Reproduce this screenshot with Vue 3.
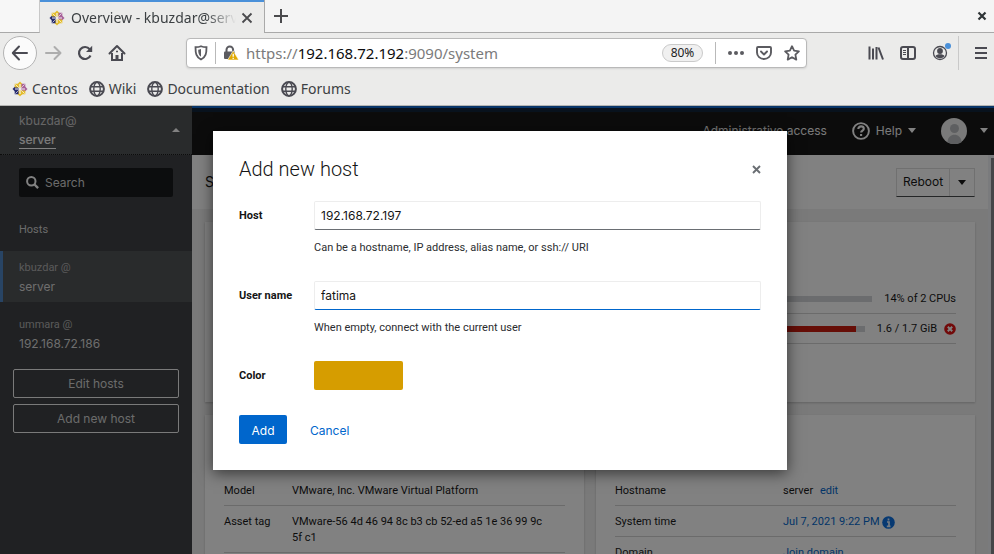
<script setup>
import { ref } from 'vue'

const bookmarks = ['Wiki', 'Documentation', 'Forums']
const petals = [
  { angle: 0, arm: '#e3bd2e', corner: '#a8629a' },
  { angle: 90, arm: '#a8629a', corner: '#e3bd2e' },
  { angle: 180, arm: '#e3bd2e', corner: '#262b70' },
  { angle: 270, arm: '#262b70', corner: '#e3bd2e' },
]

const search = ref('')
const host = ref('192.168.72.197')
const userName = ref('fatima')
const color = ref('#d69d00')

const hosts = [
  { user: 'kbuzdar @', name: 'server', active: true },
  { user: 'ummara @', name: '192.168.72.186', active: false },
]

const usage = [
  { text: '14% of 2 CPUs', percent: 14, critical: false },
  { text: '1.6 / 1.7 GiB', percent: 95, critical: true },
]
</script>

<template>
  <div class="window">
    <header class="browser">
      <div class="tabs">
        <div class="tab-lead"></div>
        <div class="tab">
          <svg class="favicon" viewBox="0 0 16 16" aria-hidden="true">
            <g v-for="p in petals" :key="p.angle" :transform="`rotate(${p.angle} 8 8)`">
              <path d="M8 .5l2.200 2.200v2.800L8 7.400 5.800 5.500V2.700z" :fill="p.arm" />
              <path d="M9.500 2.700h3.800v3.800H11L9.500 7z" :fill="p.corner" />
              <path d="M9.400 6.600l3.200-3.200" stroke="#fff" stroke-width=".7" />
            </g>
            <path d="M8 3v10M3 8h10" stroke="#f3f0ee" stroke-width="1.200" />
          </svg>
          <span class="tab-title">Overview - kbuzdar@serv</span>
          <button class="icon-btn" aria-label="Close tab">
            <svg width="12" height="12" viewBox="0 0 12 12"><path d="M1.500 1.500l9 9M10.500 1.500l-9 9" stroke="#4a4a4d" stroke-width="1.800" /></svg>
          </button>
        </div>
        <div class="tab-rest">
          <button class="icon-btn" aria-label="New tab">
            <svg width="16" height="16" viewBox="0 0 16 16"><path d="M8 1v14M1 8h14" stroke="#4a4a4d" stroke-width="2" /></svg>
          </button>
          <button class="icon-btn" aria-label="Close window">
            <svg width="10" height="10" viewBox="0 0 10 10"><path d="M1.500 1.500l7 7M8.500 1.500l-7 7" stroke="#2e3436" stroke-width="2.200" /></svg>
          </button>
        </div>
      </div>

      <div class="nav">
        <button class="back" aria-label="Back">
          <svg width="18" height="18" viewBox="0 0 18 18" fill="none" stroke="#4a4a52" stroke-width="2" stroke-linecap="round" stroke-linejoin="round"><path d="M16 9H2M8 2.500L1.800 9 8 15.500" /></svg>
        </button>
        <button class="icon-btn" aria-label="Forward">
          <svg width="18" height="18" viewBox="0 0 18 18" fill="none" stroke="#adadad" stroke-width="2" stroke-linecap="round" stroke-linejoin="round"><path d="M2 9h14M10.500 3l6 6-6 6" /></svg>
        </button>
        <button class="icon-btn" aria-label="Reload">
          <svg width="18" height="18" viewBox="0 0 18 18"><path d="M14.500 11.500a6 6 0 1 1-.8-6.300" fill="none" stroke="#4a4a52" stroke-width="2.200" /><path d="M16.200 1.800v6.200H10z" fill="#4a4a52" /></svg>
        </button>
        <button class="icon-btn" aria-label="Home">
          <svg width="18" height="18" viewBox="0 0 18 18"><path d="M1.500 9.500L9 2l7.500 7.500" fill="none" stroke="#4a4a52" stroke-width="2" stroke-linecap="round" stroke-linejoin="round" /><path d="M4 9v7h10V9" fill="none" stroke="#4a4a52" stroke-width="2" /><path d="M7.500 16v-5h3v5z" fill="#4a4a52" /><path d="M8 7.500h2" stroke="#4a4a52" stroke-width="1.500" /></svg>
        </button>
        <div class="address">
          <svg width="14" height="16" viewBox="0 0 14 16"><path d="M7 1.200c2 .9 4 1 5.500 1 0 6-.5 9.800-5.500 12.300C2 12 1.500 8.200 1.500 2.200 3 2.200 5 2.100 7 1.200z" fill="none" stroke="#5b5b60" stroke-width="1.800" /><path d="M7 4v7.800C4.700 10 4.200 8 4.200 4.700 5.200 4.700 6 4.500 7 4z" fill="#5b5b60" /></svg>
          <i class="rule"></i>
          <svg width="16" height="16" viewBox="0 0 16 16"><path d="M3.500 7V4.800a3.300 3.300 0 0 1 6.600 0V7" fill="none" stroke="#5b5b60" stroke-width="2" /><rect x="1" y="6.500" width="11" height="7.500" rx="1" fill="#5b5b60" /><path d="M10.200 5.800l5.600 9.200H4.600z" fill="#e0a900" stroke="#fff" stroke-width=".6" stroke-linejoin="round" /><path d="M10.200 8.800v3M10.200 12.800v1.200" stroke="#fff" stroke-width="1.300" /></svg>
          <div class="url" role="textbox" aria-label="Address">https://<b>192.168.72.192</b>:9090/system</div>
          <button class="zoom">80%</button>
          <i class="rule tall"></i>
          <button class="icon-btn" aria-label="Page actions">
            <svg width="16" height="6" viewBox="0 0 16 6" fill="#5b5b60"><circle cx="2" cy="3" r="2" /><circle cx="8" cy="3" r="2" /><circle cx="14" cy="3" r="2" /></svg>
          </button>
          <button class="icon-btn" aria-label="Save to Pocket">
            <svg width="16" height="16" viewBox="0 0 16 16" fill="none" stroke="#5b5b60" stroke-width="1.900" stroke-linejoin="round" stroke-linecap="round"><path d="M2 2h12a1 1 0 0 1 1 1v4.500a7 6.500 0 0 1-14 0V3a1 1 0 0 1 1-1z" /><path d="M5 6.500l3 3 3-3" /></svg>
          </button>
          <button class="icon-btn" aria-label="Bookmark this page">
            <svg width="16" height="16" viewBox="0 0 16 16"><path d="M8 1.200l2.100 4.500 4.800.6-3.500 3.400.9 4.900L8 12.200l-4.300 2.400.9-4.900L1.100 6.300l4.800-.6z" fill="none" stroke="#5b5b60" stroke-width="1.800" stroke-linejoin="round" /></svg>
          </button>
        </div>
        <div class="tools">
          <button class="icon-btn" aria-label="Library">
            <svg width="16" height="16" viewBox="0 0 16 16" stroke="#4a4a52" stroke-width="2"><path d="M1.500 1.500v13M5 3.500v11M8.500 2v12.500M10.500 2.500l4.500 12" /></svg>
          </button>
          <button class="icon-btn" aria-label="Sidebars">
            <svg width="16" height="16" viewBox="0 0 16 16" fill="none" stroke="#4a4a52"><rect x="1" y="2" width="14" height="12" rx="2" stroke-width="2" /><path d="M8 2v12" stroke-width="2" /><path d="M3 5.500h3M3 7.500h3M3 9.500h3" stroke-width="1" /></svg>
          </button>
          <button class="icon-btn account" aria-label="Account">
            <svg width="20" height="20" viewBox="0 0 20 20"><circle cx="8" cy="11" r="6.500" fill="none" stroke="#4a4a52" stroke-width="1.300" /><circle cx="8" cy="9" r="2.900" fill="#4a4a52" /><path d="M3.500 14c1-2.300 8-2.300 9 0-2 3-7 3-9 0z" fill="#4a4a52" /><circle cx="16" cy="4" r="3" fill="#4a90d9" /></svg>
          </button>
          <i class="rule full"></i>
          <button class="icon-btn" aria-label="Menu">
            <svg width="12" height="12" viewBox="0 0 12 12" stroke="#4a4a52" stroke-width="2"><path d="M0 1h12M0 6h12M0 11h12" /></svg>
          </button>
        </div>
      </div>

      <nav class="bookmarks">
        <a href="#">
          <svg class="favicon" viewBox="0 0 16 16" aria-hidden="true">
            <g v-for="p in petals" :key="p.angle" :transform="`rotate(${p.angle} 8 8)`">
              <path d="M8 .5l2.200 2.200v2.800L8 7.400 5.800 5.500V2.700z" :fill="p.arm" />
              <path d="M9.500 2.700h3.800v3.800H11L9.500 7z" :fill="p.corner" />
              <path d="M9.400 6.600l3.200-3.200" stroke="#fff" stroke-width=".7" />
            </g>
            <path d="M8 3v10M3 8h10" stroke="#f3f0ee" stroke-width="1.200" />
          </svg>
          Centos
        </a>
        <a v-for="name in bookmarks" :key="name" href="#">
          <svg width="16" height="16" viewBox="0 0 16 16" fill="none" stroke="#4a4a52" aria-hidden="true"><circle cx="8" cy="8" r="6.900" stroke-width="2" /><ellipse cx="8" cy="8" rx="3.200" ry="6.800" stroke-width="1.400" /><path d="M1.500 5.700h13M1.500 10.300h13" stroke-width="1.400" /></svg>
          {{ name }}
        </a>
      </nav>
    </header>

    <div class="app">
      <aside class="sidebar">
        <button class="current">
          <span class="current-text"><span>kbuzdar@</span><strong>server</strong></span>
          <i class="caret up"></i>
        </button>
        <label class="search">
          <svg width="13" height="13" viewBox="0 0 13 13" fill="none" stroke="#fff" aria-hidden="true"><circle cx="5.300" cy="5.300" r="4.200" stroke-width="2" /><path d="M8.500 8.500l3.600 3.600" stroke-width="2.400" /></svg>
          <input v-model="search" type="text" placeholder="Search" aria-label="Search" />
        </label>
        <h2>Hosts</h2>
        <a v-for="h in hosts" :key="h.name" href="#" class="host" :class="{ active: h.active }">
          <small>{{ h.user }}</small>
          <span>{{ h.name }}</span>
        </a>
        <div class="side-actions">
          <button>Edit hosts</button>
          <button>Add new host</button>
        </div>
      </aside>

      <div class="content">
        <div class="topbar">
          <button class="top-btn">Administrative access</button>
          <button class="top-btn help">
            <svg width="18" height="18" viewBox="0 0 18 18" fill="none" stroke="#fff" aria-hidden="true"><circle cx="9" cy="9" r="7.900" stroke-width="1.900" /><path d="M6.300 7c0-3.600 5.500-3.300 5.500-.3 0 1.900-2.700 1.900-2.700 3.900M9.100 12v2" stroke-width="2.100" /></svg>
            Help
            <i class="caret"></i>
          </button>
          <button class="top-btn user" aria-label="Session">
            <svg width="26" height="26" viewBox="0 0 26 26" aria-hidden="true"><circle cx="13" cy="13" r="13" fill="#f0f0f0" /><circle cx="13.500" cy="10.500" r="4.500" fill="#b8bbbe" /><path d="M6.500 24.200c0-10 14-10 14 0a13 13 0 0 1-14 0z" fill="#b8bbbe" /></svg>
            <i class="caret"></i>
          </button>
        </div>

        <div class="scroller">
          <main>
            <div class="page-head">
              <h1>Server</h1>
              <div class="split">
                <button>Reboot</button>
                <button aria-label="More power options"><i class="caret dark"></i></button>
              </div>
            </div>
            <div class="cards">
              <section class="card"></section>
              <section class="card usage">
                <div v-for="u in usage" :key="u.text" class="usage-row">
                  <div class="bar"><div class="fill" :class="{ critical: u.critical }" :style="{ width: u.percent + '%' }"></div></div>
                  <span>{{ u.text }}</span>
                  <svg v-if="u.critical" width="12" height="12" viewBox="0 0 12 12" aria-hidden="true"><circle cx="6" cy="6" r="5.800" fill="#e01010" /><path d="M3.800 3.800l4.400 4.400M8.200 3.800L3.800 8.200" stroke="#fff" stroke-width="2" /></svg>
                </div>
              </section>
              <section class="card info">
                <table>
                  <tbody>
                    <tr><th scope="row">Model</th><td>VMware, Inc. VMware Virtual Platform</td></tr>
                    <tr><th scope="row">Asset tag</th><td>VMware-56 4d 46 94 8c b3 cb 52-ed a5 1e 36 99 9c 5f c1</td></tr>
                  </tbody>
                </table>
              </section>
              <section class="card info wide-label">
                <table>
                  <tbody>
                    <tr><th scope="row">Hostname</th><td>server <a href="#" class="edit">edit</a></td></tr>
                    <tr>
                      <th scope="row">System time</th>
                      <td>
                        <span class="time"><a href="#">Jul 7, 2021 9:22 PM</a>
                          <svg width="13" height="13" viewBox="0 0 13 13" aria-hidden="true"><circle cx="6.500" cy="6.500" r="6.300" fill="#0a6fe0" /><path d="M6.500 2.500v2M5 6h2v4M4.800 10.300h3.700" stroke="#e8f2ff" stroke-width="1.700" fill="none" /></svg>
                        </span>
                      </td>
                    </tr>
                    <tr><th scope="row">Domain</th><td><a href="#">Join domain</a></td></tr>
                  </tbody>
                </table>
              </section>
            </div>
          </main>
          <div class="track"><div class="thumb"></div></div>
        </div>
      </div>

      <div class="backdrop">
        <form class="modal" role="dialog" aria-labelledby="dialog-title" @submit.prevent>
          <div class="modal-head">
            <h2 id="dialog-title">Add new host</h2>
            <button type="button" class="icon-btn" aria-label="Close">
              <svg width="9" height="9" viewBox="0 0 9 9"><path d="M1 1l7 7M8 1L1 8" stroke="#6a6e73" stroke-width="1.900" /></svg>
            </button>
          </div>
          <div class="field">
            <label for="host">Host</label>
            <div class="control">
              <input id="host" v-model="host" type="text" />
              <p>Can be a hostname, IP address, alias name, or ssh:// URI</p>
            </div>
          </div>
          <div class="field">
            <label for="user">User name</label>
            <div class="control">
              <input id="user" v-model="userName" class="focused" type="text" />
              <p>When empty, connect with the current user</p>
            </div>
          </div>
          <div class="field">
            <label for="color">Color</label>
            <input id="color" v-model="color" class="swatch" type="color" />
          </div>
          <div class="modal-foot">
            <button type="submit" class="primary">Add</button>
            <button type="button" class="link">Cancel</button>
          </div>
        </form>
      </div>
    </div>
  </div>
</template>

<style>
body {
  margin: 0;
}
</style>

<style scoped>
* {
  box-sizing: border-box;
}
button,
input {
  font: inherit;
  color: inherit;
  margin: 0;
  padding: 0;
  border: 0;
  background: none;
}
h1,
h2,
p {
  margin: 0;
  font-weight: 400;
}
a {
  text-decoration: none;
  color: inherit;
}
svg {
  display: block;
  flex: none;
}
.window {
  display: flex;
  flex-direction: column;
  height: 100vh;
  overflow: hidden;
}

/* Browser chrome */
.browser {
  font: 14px/20px "Noto Sans", sans-serif;
  color: #3c4043;
  background: #ebebea;
  border-bottom: 1px solid #b4b4b2;
}
.icon-btn {
  display: flex;
  align-items: center;
  justify-content: center;
}
.tabs {
  display: flex;
  height: 33px;
}
.tab-lead {
  width: 40px;
  background: #f7f7f7;
  border-bottom: 1px solid #a9a9a9;
  border-right: 1px solid #c8c8c8;
}
.tab {
  display: flex;
  align-items: center;
  width: 224px;
  padding: 0 11px 0 9px;
  border-top: 2px solid #4a90d9;
}
.favicon {
  width: 16px;
  height: 16px;
}
.tab-title {
  flex: 1;
  margin: 0 5px 0 6px;
  overflow: hidden;
  white-space: nowrap;
  mask-image: linear-gradient(to right, #000 82%, transparent);
}
.tab-rest {
  display: flex;
  flex: 1;
  align-items: center;
  justify-content: space-between;
  padding: 0 7px 0 8px;
  background: #f4f4f4;
  border-left: 1px solid #a9a9a9;
  border-bottom: 1px solid #a9a9a9;
}
.nav {
  display: flex;
  align-items: center;
  height: 40px;
  gap: 14px;
  padding: 0 7px 0 3px;
}
.back {
  display: flex;
  align-items: center;
  justify-content: center;
  width: 34px;
  height: 34px;
  margin-right: -7px;
  border: 1px solid #b4b4b4;
  border-radius: 50%;
  background: #fbfbfb;
}
.address {
  display: flex;
  flex: 1;
  align-items: center;
  height: 30px;
  gap: 12px;
  margin-left: 46px;
  padding: 0 6px 0 7px;
  background: #fff;
  border: 1px solid #b9b9b9;
  border-radius: 4px;
  box-shadow: 0 1px 2px rgba(0, 0, 0, 0.1);
}
.rule {
  width: 1px;
  height: 22px;
  background: #b9b9b9;
}
.address .rule {
  margin: 0 -5px;
}
.url {
  flex: 1;
  margin-left: -5px;
  font-size: 15px;
  color: #7b7b7b;
  white-space: nowrap;
}
.url b {
  font-weight: 400;
  color: #0c0c0d;
}
.zoom {
  width: 41px;
  height: 18px;
  border: 1px solid #cacaca;
  border-radius: 9px;
  background: #f0f0f0;
  font-size: 12px;
  line-height: 16px;
  color: #222;
}
.address .rule.tall {
  margin: 0;
}
.tools {
  display: flex;
  align-items: center;
  gap: 16px;
  margin-left: 47px;
}
.account {
  margin: 0 -2px 3px 0;
}
.rule.full {
  height: 34px;
  margin-left: -8px;
  background: #c9c9c9;
}
.bookmarks {
  display: flex;
  align-items: center;
  height: 32px;
  gap: 11px;
  padding: 0 12px;
}
.bookmarks a {
  display: flex;
  align-items: center;
  gap: 4px;
}

/* Application */
.app {
  position: relative;
  display: flex;
  flex: 1;
  min-height: 0;
  font: 11px/16px Roboto, sans-serif;
  color: #151515;
}
.caret {
  width: 0;
  height: 0;
  border: 4px solid transparent;
  border-top: 5px solid #fff;
  border-bottom: 0;
}
.caret.up {
  border-top: 0;
  border-bottom: 4px solid #fff;
}
.caret.dark {
  border-top-color: #151515;
}
.sidebar {
  display: flex;
  flex-direction: column;
  width: 192px;
  flex: none;
  background: #3c3f42;
  color: #f0f0f0;
}
.current {
  display: flex;
  align-items: center;
  justify-content: space-between;
  height: 49px;
  padding: 0 12px 0 19px;
  background: #4f5255;
  border-bottom: 1px dotted #151515;
  font: 12px/20px Inter, sans-serif;
  text-align: left;
}
.current-text {
  display: flex;
  flex-direction: column;
  align-items: flex-start;
}
.current-text span {
  color: #c8c8c8;
}
.current-text strong {
  font-weight: 500;
  line-height: 17px;
  border-bottom: 1px solid #fff;
}
.search {
  display: flex;
  align-items: center;
  gap: 6px;
  height: 29px;
  margin: 13px 19px 0;
  padding: 0 7px;
  border-radius: 2px;
  background: #151719;
}
.search input {
  flex: 1;
  min-width: 0;
  font: 12px/20px Inter, sans-serif;
}
.search input::placeholder {
  color: #d2d2d2;
  opacity: 1;
}
.sidebar h2 {
  margin: 23px 19px 11px;
  font-size: 11px;
  line-height: 20px;
  color: #d2d2d2;
}
.host {
  display: flex;
  flex-direction: column;
  margin-bottom: 6px;
  padding: 8px 19px 6px;
  line-height: 19px;
}
.host.active {
  background: #4f5255;
  box-shadow: inset 3px 0 #4d84c4;
}
.host small {
  font-size: 11px;
  line-height: 18px;
  color: #b0b0b0;
}
.host span {
  font-family: Inter, sans-serif;
  font-size: 12px;
  color: #d8d8d8;
}
.side-actions {
  display: flex;
  flex-direction: column;
  gap: 6px;
  margin: 4px 13px;
}
.side-actions button {
  height: 29px;
  padding-top: 1px;
  border: 1px solid #f0f0f0;
  border-radius: 2px;
  font: 12px/20px Inter, sans-serif;
  color: #d2d2d2;
}
.content {
  display: flex;
  flex-direction: column;
  flex: 1;
  min-width: 0;
}
.topbar {
  display: flex;
  align-items: center;
  justify-content: flex-end;
  height: 49px;
  flex: none;
  gap: 25px;
  padding-right: 6px;
  background: linear-gradient(#0d66cc 2px, #0d2136 2px, #0d2136 6px, #151515 6px);
  color: #f0f0f0;
  font: 12px/20px Inter, sans-serif;
}
.top-btn {
  display: flex;
  align-items: center;
  gap: 6px;
}
.top-btn.user {
  gap: 13px;
}
.scroller {
  display: flex;
  flex: 1;
  min-height: 0;
}
main {
  flex: 1;
  min-width: 0;
  overflow: hidden;
  background: #f0f0f0;
}
.track {
  width: 6px;
  padding: 3px 0 0 3px;
  background: #f0f2f6;
}
.thumb {
  height: 100%;
  background: #86898c;
}
.page-head {
  display: flex;
  align-items: center;
  justify-content: space-between;
  height: 54px;
  padding: 0 13px;
  background: #fff;
}
.page-head h1 {
  font: 14px/20px Inter, sans-serif;
}
.split {
  display: flex;
  height: 29px;
  border: 1px solid #dcdcdc;
  border-bottom-color: #45484b;
}
.split button {
  display: flex;
  align-items: center;
  justify-content: center;
  width: 24px;
  font: 12px/20px Inter, sans-serif;
}
.split button:first-child {
  width: 53px;
  border-right: 1px solid #dcdcdc;
}
.cards {
  display: grid;
  grid-template-columns: 1fr 1fr;
  gap: 13px 12px;
  padding: 13px;
}
.card {
  padding: 0 19px;
  background: #fff;
  box-shadow: 0 1px 2px rgba(3, 3, 3, 0.2);
}
.usage {
  padding-top: 62px;
  padding-bottom: 58px;
}
.usage-row {
  display: flex;
  align-items: center;
  gap: 12px;
  padding: 7px 0 6px 84px;
  border-bottom: 1px solid #d2d2d2;
}
.usage-row svg {
  margin-left: -5px;
}
.bar {
  flex: 1;
  height: 6px;
  background: #d2d5d8;
}
.fill {
  height: 100%;
  background: #0066cc;
}
.fill.critical {
  background: #c9190b;
}
.info {
  padding-top: 60px;
  padding-bottom: 20px;
}
table {
  width: 100%;
  border-collapse: collapse;
  table-layout: fixed;
}
tr {
  border-bottom: 1px solid #d2d2d2;
}
th,
td {
  padding: 8px 0 6px;
  font-weight: 400;
  text-align: left;
  vertical-align: top;
}
td {
  padding-right: 16px;
}
th {
  width: 68px;
}
.wide-label th {
  width: 168px;
}
td a {
  color: #0066cc;
}
.edit {
  margin-left: 4px;
}
.time {
  display: flex;
  align-items: center;
  gap: 2px;
}

/* Dialog */
.backdrop {
  position: absolute;
  inset: 0;
  display: flex;
  align-items: flex-start;
  justify-content: center;
  padding: 25px 0 0 6px;
  background: rgba(3, 3, 3, 0.5);
}
.modal {
  width: 100%;
  max-width: 574px;
  padding: 26px;
  background: #fff;
  box-shadow: 0 3px 14px rgba(3, 3, 3, 0.6);
}
.modal-head {
  display: flex;
  align-items: center;
  justify-content: space-between;
  margin-bottom: 20px;
}
.modal-head h2 {
  font-size: 20px;
  font-weight: 300;
  line-height: 24px;
}
.field {
  display: flex;
}
.field label {
  width: 75px;
  flex: none;
  line-height: 29px;
  font-weight: 700;
}
.control {
  flex: 1;
  margin-bottom: 25px;
}
.control input {
  width: 100%;
  height: 29px;
  padding: 0 6px;
  border: 1px solid #ededed;
  border-bottom-color: #6a6e73;
  border-radius: 2px;
  font: 12px/20px Inter, sans-serif;
}
.control input.focused {
  border-bottom-color: #0066cc;
}
.control p {
  margin-top: 10px;
  color: #2b2d30;
}
.swatch {
  width: 89px;
  height: 29px;
  appearance: none;
}
.swatch::-webkit-color-swatch-wrapper {
  padding: 0;
}
.swatch::-webkit-color-swatch {
  border: 0;
  border-radius: 2px;
}
.modal-foot {
  display: flex;
  gap: 23px;
  margin-top: 25px;
  font: 12px/20px Inter, sans-serif;
}
.modal-foot button {
  padding: 6px 0 3px;
}
.modal-foot .primary {
  width: 48px;
  border-radius: 2px;
  background: #0066cc;
  color: #fff;
}
.link {
  color: #0066cc;
}
</style>
